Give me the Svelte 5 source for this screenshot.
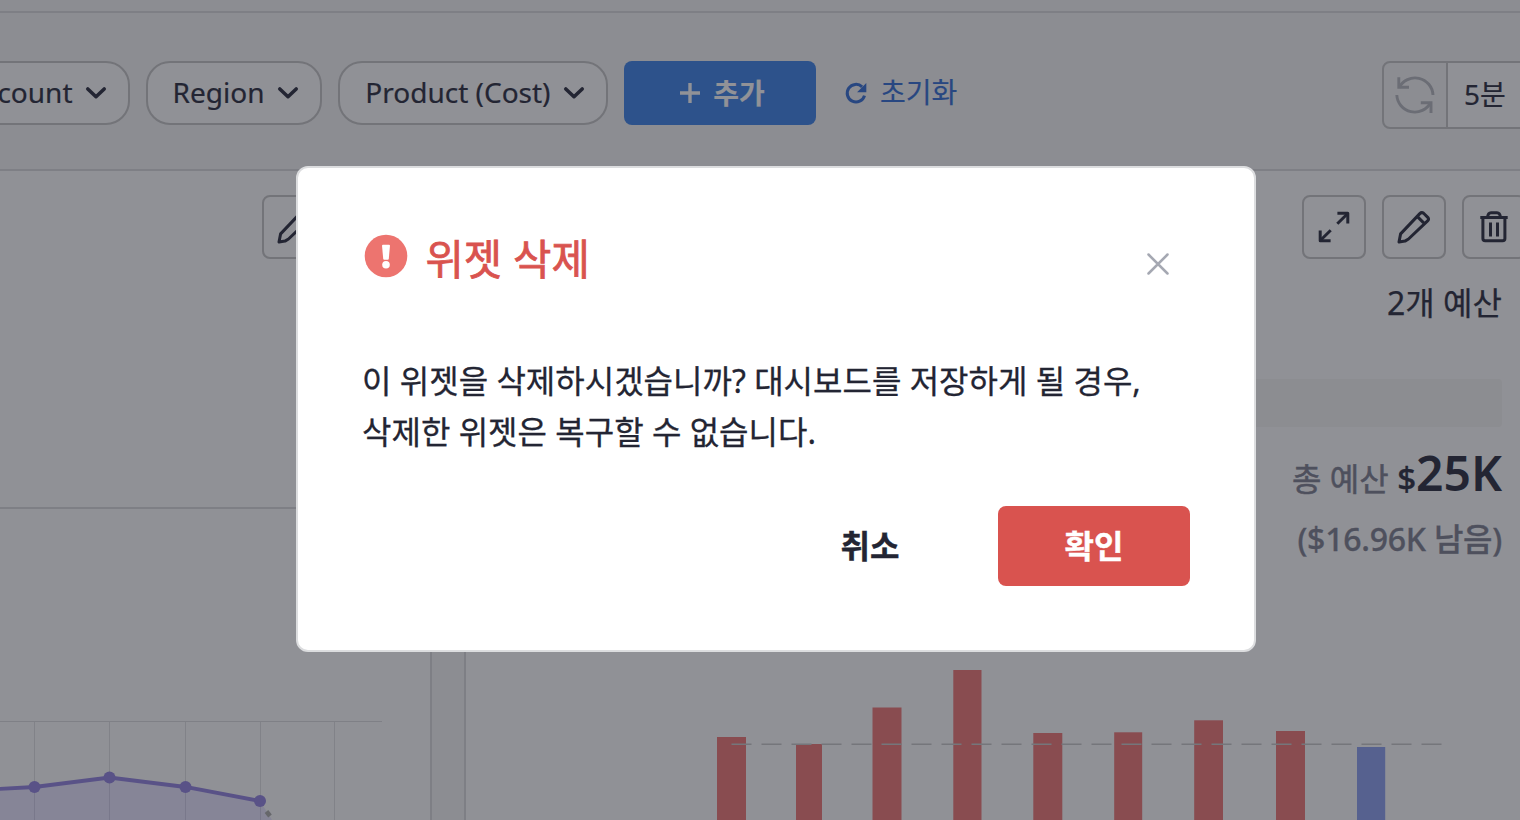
<script>
  const points = [[-76, 793], [34.5, 787], [109.5, 777.5], [185.5, 787], [260, 801]];
  const line = points.map((p) => p.join(',')).join(' ');
  const grid = [34.5, 109.5, 185.5, 260.5, 334.5];
  const bars = [
    [717, 737, 29], [796, 744, 26], [872.5, 707.5, 29], [953.3, 670, 28.2], [1033.3, 733, 29],
    [1114.2, 732.3, 28], [1194.2, 720.3, 28.8], [1276, 731, 29], [1357, 747, 28.2]
  ];
</script>

{#snippet chevron()}
  <svg class="chev" width="22" height="14" viewBox="0 0 22 14"><path d="M2.8 3 11 10.7 19.2 3" /></svg>
{/snippet}

{#snippet pencil()}
  <svg class="ico" width="40" height="40" viewBox="0 0 40 40">
    <path d="M5 35 6.6 26.9 25.8 6.6Q27.7 4.8 29.6 6.3L34 10.6Q35.2 12.3 33.6 13.8L14.5 32 11 34.1Z M23.4 9.6 30.7 16.9" />
  </svg>
{/snippet}

<div class="page">
  <div class="strip"></div>
  <div class="toolbar">
    <div class="pill first"><span>Account</span>{@render chevron()}</div>
    <div class="pill region"><span>Region</span>{@render chevron()}</div>
    <div class="pill product"><span>Product (Cost)</span>{@render chevron()}</div>
    <div class="add">
      <svg width="20" height="20" viewBox="0 0 20 20"><path d="M10 0V20M0 10H20" stroke="#919297" stroke-width="3.4" /></svg>
      <span>추가</span>
    </div>
    <div class="reset">
      <svg width="24" height="24" viewBox="0 0 24 24">
        <path d="M20.5 14.6A8.8 8.8 0 1 1 18.1 5.8" fill="none" stroke="#284781" stroke-width="3" />
        <path d="M22.3 2V11.2H13.1Z" fill="#284781" />
      </svg>
      <span>초기화</span>
    </div>
    <div class="refresh">
      <div class="sync">
        <svg width="40" height="40" viewBox="0 0 40 40" fill="none" stroke="#6b6d75" stroke-width="2.9">
          <path d="M38 20A18 18 0 0 0 4.1 12.5M1.8 20A18 18 0 0 0 35.7 27.5" />
          <path d="M3.8 2.2V12.3H14M36 38V27.7H25.8" />
        </svg>
      </div>
      <div class="interval"><span>5분</span></div>
    </div>
  </div>

  <div class="board">
    <div class="left">
      <div class="widget top"><div class="btn">{@render pencil()}</div></div>
      <div class="widget">
        <svg width="430" height="169" viewBox="0 651 430 169">
          <path d="M0 721.5H382" stroke="#7f8086" />
          {#each grid as x}<path d="M{x} 722V820" stroke="#818288" />{/each}
          <polygon points="{line} 272,820 -76,820" fill="#4d3fa0" fill-opacity=".14" />
          <polyline points={line} fill="none" stroke="#595287" stroke-width="3.8" />
          <path d="M266.5 811.5 270 816" stroke="#66676b" stroke-width="4.5" />
          {#each points as p}<circle cx={p[0]} cy={p[1]} r="6" fill="#595287" />{/each}
        </svg>
      </div>
    </div>
    <div class="gutter"></div>
    <div class="right">
      <div class="actions">
        <div class="btn">
          <svg class="ico" width="40" height="40" viewBox="0 0 40 40">
            <path d="M23.3 16.8 33.5 6.7M16.7 23.2 6.3 33.5" /><path d="M23.4 6.2H33.8V16.4M6.2 23.6V33.8H16.6" />
          </svg>
        </div>
        <div class="btn">{@render pencil()}</div>
        <div class="btn">
          <svg class="ico" width="40" height="40" viewBox="0 0 40 40">
            <path d="M6.3 10.5H33.7M8.9 10.5V31.5Q8.9 33.8 11.2 33.8H28.6Q30.9 33.8 30.9 31.5V10.5M13.5 10.5Q14 5.7 17 5.7H23Q26 5.7 26.5 10.5M16.5 15.5V29.5M23.5 15.5V29.5" />
          </svg>
        </div>
      </div>
      <div class="count">2개 예산</div>
      <div class="meter"></div>
      <div class="total"><span>총 예산</span><b class="cur">$</b><b class="sum">25K</b></div>
      <div class="remain">($16.96K 남음)</div>
      <svg class="bars" width="1054" height="169" viewBox="466 651 1054 169">
        {#each bars as b, i}
          <rect x={b[0]} y={b[1]} width={b[2]} height={820 - b[1]} fill={i === 8 ? '#56618f' : '#894c50'} />
        {/each}
        <path d="M731.5 744.3H1442" stroke="#75767b" stroke-width="1.4" stroke-dasharray="20 10" />
      </svg>
    </div>
  </div>

  <div class="overlay">
    <div class="modal">
      <div class="head">
        <svg class="alert" width="44" height="44" viewBox="0 0 44 44">
          <circle cx="22" cy="22" r="21.3" fill="#ed746f" />
          <path d="M18 11.5Q18 10.7 19 10.7H25Q26 10.7 26 11.5L24.8 24.7Q24.7 25.7 23.8 25.7H20.2Q19.3 25.7 19.2 24.7Z" fill="#fff" />
          <circle cx="22" cy="30.8" r="3.8" fill="#fff" />
        </svg>
        <h2>위젯 삭제</h2>
        <svg class="close" width="24" height="24" viewBox="0 0 24 24"><path d="M2.5 2.5 21.5 21.5M21.5 2.5 2.5 21.5" /></svg>
      </div>
      <p>이 위젯을 삭제하시겠습니까? 대시보드를 저장하게 될 경우,<br />삭제한 위젯은 복구할 수 없습니다.</p>
      <div class="foot">
        <button class="cancel">취소</button>
        <button class="ok">확인</button>
      </div>
    </div>
  </div>
</div>

<style>
  :global(body) { margin: 0; overflow: hidden; }
  .page, .page * { box-sizing: border-box; }
  .page {
    position: relative; width: 1520px; height: 820px; overflow: hidden;
    display: flex; flex-direction: column; background: #8c8d92; color: #232533;
    font-family: "Noto Sans", "Noto Sans CJK KR", sans-serif;
  }
  svg { flex: none; display: block; }
  .strip { height: 13px; flex: none; border-bottom: 2px solid #7e7f85; }
  .toolbar {
    height: 158px; flex: none; display: flex; align-items: flex-start;
    padding-top: 48px; border-bottom: 2px solid #7e7f85; white-space: nowrap;
    -webkit-text-stroke: .2px currentColor;
  }
  .toolbar span { padding-bottom: 3px; }
  .pill {
    height: 64px; flex: none; display: flex; align-items: center; justify-content: flex-end; gap: 12.5px;
    border: 2px solid #737479; border-radius: 24px; background: #909196;
    padding: 0 21px 0 0; margin-right: 16px; font-size: 28px; line-height: 40px;
  }
  .first { width: 200px; margin-left: -70px; }
  .region { width: 176px; }
  .product { width: 270px; }
  .chev path { fill: none; stroke: #232533; stroke-width: 3.6; stroke-linecap: round; stroke-linejoin: round; }
  .add {
    width: 192px; height: 64px; flex: none; display: flex; align-items: center; justify-content: center; gap: 13px;
    padding-left: 5px; border-radius: 8px; background: #2d528b; color: #919297; font-size: 28px; font-weight: 700;
  }
  .reset { height: 64px; display: flex; align-items: center; gap: 12px; margin-left: 28px; color: #284781; font-size: 28px; }
  .reset span { padding-bottom: 5px; }
  .refresh {
    width: 150px; height: 68px; flex: none; display: flex; margin-left: auto; margin-right: -12px;
    border: 2px solid #737479; border-radius: 8px; overflow: hidden;
  }
  .sync { width: 64px; display: flex; align-items: center; justify-content: center; border-right: 2px solid #737479; }
  .interval { flex: 1; display: flex; align-items: center; padding-left: 16px; background: #909196; font-size: 28px; }
  .interval span { padding-bottom: 5px; }
  .board { flex: 1; min-height: 0; display: flex; background: #909196; }
  .left { width: 430px; flex: none; display: flex; flex-direction: column; }
  .widget { flex: 1; display: flex; align-items: flex-end; }
  .top { flex: none; height: 338px; align-items: flex-start; padding: 24px 0 0 262px; border-bottom: 2px solid #7e7f85; }
  .gutter { width: 36px; flex: none; background: #8c8d92; border: solid #7e7f85; border-width: 0 2px; }
  .btn {
    width: 64px; height: 64px; flex: none; display: flex; align-items: center; justify-content: center;
    border: 2px solid #737479; border-radius: 8px;
  }
  .ico { fill: none; stroke: #232533; stroke-width: 3; stroke-linejoin: round; }
  .right { flex: 1; min-width: 0; display: flex; flex-direction: column; align-items: flex-end; padding: 24px 18px 0 0; }
  .actions { display: flex; gap: 16px; margin-right: -24px; }
  .count { margin-top: 20px; height: 48px; line-height: 48px; font-size: 32px; -webkit-text-stroke: .25px currentColor; }
  .meter { width: 980px; height: 48px; margin-top: 52px; border-radius: 4px; background: #8c8d91; }
  .total { height: 64px; margin-top: 14px; display: flex; align-items: baseline; line-height: 64px; color: #4e505d; font-size: 32px; }
  .total span { -webkit-text-stroke: .5px currentColor; }
  .total b { color: #232533; font-weight: 600; }
  .total .cur { margin-left: 8.5px; font-size: 33px; font-weight: 500; -webkit-text-stroke: .4px currentColor; }
  .sum { font-size: 48px; }
  .remain { height: 44px; margin-top: 12px; line-height: 44px; color: #4e505d; font-size: 32px; font-weight: 500; letter-spacing: -.25px; -webkit-text-stroke: .3px currentColor; }
  .bars { margin: auto -18px 0 0; }
  .overlay { position: absolute; inset: 0; padding: 166px 0 0 296px; }
  .modal { width: 960px; height: 486px; border: 2px solid #dcdddf; border-radius: 12px; background: #fff; padding: 59px 64px 0; }
  .head { display: flex; align-items: center; height: 64px; }
  .alert { margin: 0 0 7px 2px; }
  h2 { margin: 0 auto 0 17.5px; color: #d9534f; font-size: 41.7px; line-height: 64px; font-weight: 400; -webkit-text-stroke: .8px #d9534f; }
  .close { margin: 10px 20px 0 0; }
  .close path { stroke: #a5a8b2; stroke-width: 2.5; stroke-linecap: round; }
  p { margin: 64px 0 0; font-size: 32px; line-height: 51.2px; white-space: nowrap; -webkit-text-stroke: .3px #232533; }
  .foot { display: flex; justify-content: flex-end; margin-top: 49px; }
  button { width: 192px; height: 80px; border: 0; border-radius: 8px; padding: 0 0 4px; font: 700 32px "Noto Sans", "Noto Sans CJK KR", sans-serif; -webkit-text-stroke: .4px currentColor; }
  .cancel { background: none; color: #232533; margin-right: 32px; }
  .ok { background: #d9534f; color: #fff; }
</style>
